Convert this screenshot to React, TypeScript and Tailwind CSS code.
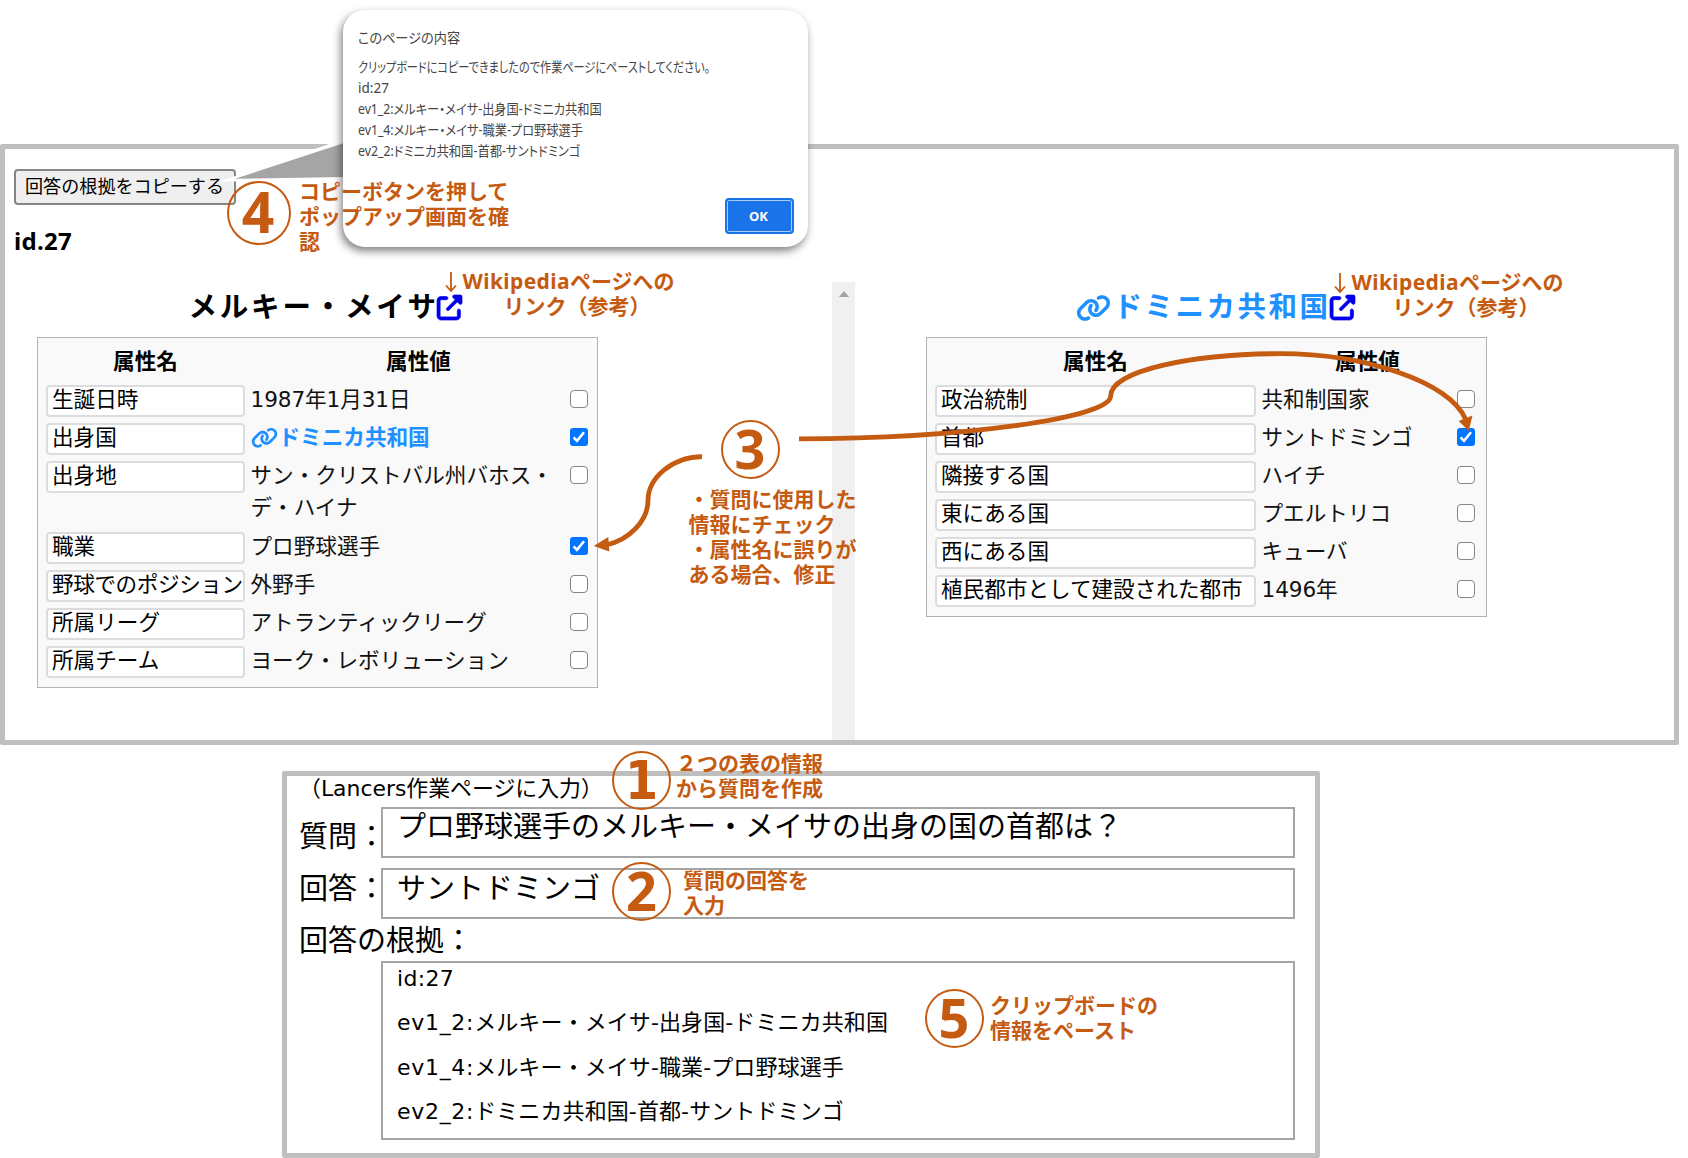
import { ReactNode } from "react";
import { FaLink, FaUpRightFromSquare } from "react-icons/fa6";

const CJK = "font-['DejaVu_Sans','Noto_Sans_CJK_JP',sans-serif]";
const NOTE = "absolute font-bold text-[21px] leading-[25px] text-[#c55a11] whitespace-nowrap font-['Noto_Sans','Noto_Sans_CJK_JP',sans-serif]";

type Row = { name: string; value: ReactNode; checked?: boolean; tall?: boolean };

function Check({ checked }: { checked?: boolean }) {
  return checked ? (
    <span className="mt-[5px] flex size-[18px] items-center justify-center rounded-[3px] bg-[#0075ff]">
      <svg viewBox="0 0 18 18" className="size-[18px]" fill="none" stroke="#fff" strokeWidth="2.6">
        <path d="M3.6 9.4 L7 12.8 L14 4.2" />
      </svg>
    </span>
  ) : (
    <span className="mt-[5px] block size-[18px] rounded-[4px] border-[1.5px] border-[#858585] bg-white" />
  );
}

function AttrTable({ rows, cols }: { rows: Row[]; cols: string }) {
  return (
    <div className="w-[561px] border-[1.5px] border-[#b2b2b2] bg-[#f9f9f9] pt-[8px] pb-[3px] pl-[8.5px] text-[21.6px]">
      <div className={"grid h-[39px] text-center font-bold leading-[32px] text-black " + cols}>
        <span>属性名</span>
        <span className="pl-[22px]">属性値</span>
      </div>
      {rows.map((r) => (
        <div key={r.name} className={"grid items-start " + cols + (r.tall ? " h-[71px]" : " h-[38px]")}>
          <div className="h-8 whitespace-nowrap rounded-[4px] border-2 border-[#dcdcdc] bg-white pl-[4px] leading-[26px] text-black">
            <span className={r.name.length === 9 ? "tracking-[-0.4px]" : ""}>{r.name}</span>
          </div>
          <div className="pl-[5.5px] leading-[32px] text-[#111] whitespace-nowrap -mt-[1px]">{r.value}</div>
          <Check checked={r.checked} />
        </div>
      ))}
    </div>
  );
}

const leftRows: Row[] = [
  { name: "生誕日時", value: <span className="tracking-[-0.1px]">1987年1月31日</span> },
  {
    name: "出身国",
    checked: true,
    value: (
      <span className="flex items-center font-bold text-[#1e90ff]">
        <FaLink className="mr-[1px] h-[21.6px] w-[27px]" />
        ドミニカ共和国
      </span>
    ),
  },
  { name: "出身地", tall: true, value: <>サン・クリストバル州バホス・<br />デ・ハイナ</> },
  { name: "職業", value: "プロ野球選手", checked: true },
  { name: "野球でのポジション", value: "外野手" },
  { name: "所属リーグ", value: "アトランティックリーグ" },
  { name: "所属チーム", value: "ヨーク・レボリューション" },
];

const rightRows: Row[] = [
  { name: "政治統制", value: "共和制国家" },
  { name: "首都", value: "サントドミンゴ", checked: true },
  { name: "隣接する国", value: "ハイチ" },
  { name: "東にある国", value: "プエルトリコ" },
  { name: "西にある国", value: "キューバ" },
  { name: "植民都市として建設された都市", value: <span className="tracking-[-0.1px]">1496年</span> },
];

function ExternalLink({ className }: { className: string }) {
  return <FaUpRightFromSquare stroke="#0000ee" strokeWidth="14" className={"size-[25px] overflow-visible text-[#0000ee] " + className} />;
}

function EvidencePanel() {
  return (
    <section className="flex h-[601px] w-[1679px] flex-col rounded-[2px] border-[5px] border-[#bfbfbf] bg-white">
      <div className="pl-[9px] pt-[20px]">
        <button className="flex h-[36px] w-[222px] items-center rounded-[4px] border-2 border-[#858585] bg-[#efefef] pl-[9px] text-[18.1px] text-black">
          回答の根拠をコピーする
        </button>
        <div className="mt-[20px] h-[57px] text-[24px] font-bold leading-[32px] tracking-[0.3px] text-black font-['Noto_Sans',sans-serif]">id.27</div>
      </div>
      <div className="flex min-h-0 flex-1">
        <div className="w-[827px] pl-[31.5px]">
          <div className="flex h-[55px] items-start pl-[152px] pt-[6px]">
            <h1 className="text-[28.5px] font-bold leading-[40px] tracking-[2.8px] text-black">メルキー・メイサ</h1>
            <ExternalLink className="-ml-[2px] mt-[7px]" />
          </div>
          <AttrTable rows={leftRows} cols="grid-cols-[199px_325px_18px]" />
        </div>
        <div className="flex w-[23px] justify-center bg-[#f0f0f0] pt-[9px]">
          <svg viewBox="0 0 10 6" className="h-[6px] w-[10px]">
            <path d="M5 0 L10 6 H0 Z" fill="#a3a3a3" />
          </svg>
        </div>
        <div className="pl-[70.5px]">
          <div className="flex h-[55px] items-start pl-[150px] pt-[6px]">
            <FaLink className="mt-[5.5px] mr-[3px] h-[28px] w-[35px] text-[#1e90ff]" />
            <h1 className="text-[28.5px] font-bold leading-[40px] tracking-[2.5px] text-[#1e90ff]">ドミニカ共和国</h1>
            <ExternalLink className="-ml-[1px] mt-[7px]" />
          </div>
          <AttrTable rows={rightRows} cols="grid-cols-[321px_201px_18px]" />
        </div>
      </div>
    </section>
  );
}

function EvidenceLine({ id, text }: { id: string; text: string }) {
  return (
    <div>
      <span className="tracking-[0.7px]">{id}</span>
      <span className="tracking-[0.1px]">{text}</span>
    </div>
  );
}

function AnswerPanel() {
  const box = "border-2 border-[#a5a5a5] pl-[14px]";
  return (
    <section className="ml-[282px] mt-[26px] h-[387px] w-[1038px] rounded-[2px] border-[5px] border-[#bfbfbf] bg-white pl-[11px] text-[29px] text-black">
      <div className="h-[31px] pl-[1px] text-[21.9px] leading-[26px]">（Lancers作業ページに入力）</div>
      <div className="flex">
        <div className="w-[83px] pl-[1px] pt-[10px] leading-[40px] whitespace-nowrap">質問：</div>
        <div className={box + " h-[51px] w-[914px] leading-[36px]"}>プロ野球選手のメルキー・メイサの出身の国の首都は？</div>
      </div>
      <div className="mt-[10px] flex">
        <div className="w-[83px] pl-[1px] pt-[1px] leading-[40px] whitespace-nowrap">回答：</div>
        <div className={box + " h-[51px] w-[914px] leading-[38px]"}>サントドミンゴ</div>
      </div>
      <div className="h-[42px] pl-[1px] leading-[44px]">回答の根拠：</div>
      <div className={box + " ml-[83px] h-[179px] w-[914px] text-[22px] leading-[44.4px]"}>
        <div className="-mt-[6px] tracking-[0.3px]">id:27</div>
        <EvidenceLine id="ev1_2:" text="メルキー・メイサ-出身国-ドミニカ共和国" />
        <EvidenceLine id="ev1_4:" text="メルキー・メイサ-職業-プロ野球選手" />
        <EvidenceLine id="ev2_2:" text="ドミニカ共和国-首都-サントドミンゴ" />
      </div>
    </section>
  );
}

function Popup() {
  return (
    <div className="absolute left-[343px] top-[10px] h-[237px] w-[465px] rounded-[22px] bg-white pl-[15px] pt-[16.5px] text-[13.5px] leading-[21px] text-[#454545] shadow-[-2px_4px_9px_rgba(0,0,0,0.5)] font-['Noto_Sans','Noto_Sans_CJK_JP',sans-serif] [font-feature-settings:'palt'] whitespace-nowrap">
      <div className="mb-[9px] origin-left scale-x-[0.94] text-[14px]">このページの内容</div>
      <div className="origin-left scale-x-[0.825]">クリップボードにコピーできましたので作業ページにペーストしてください。</div>
      <div>id:27</div>
      <div className="origin-left scale-x-[0.905]">ev1_2:メルキー・メイサ-出身国-ドミニカ共和国</div>
      <div className="origin-left scale-x-[0.907]">ev1_4:メルキー・メイサ-職業-プロ野球選手</div>
      <div className="origin-left scale-x-[0.912]">ev2_2:ドミニカ共和国-首都-サントドミンゴ</div>
      <button className="absolute left-[382px] top-[188px] flex h-[36px] w-[69px] items-center justify-center rounded-[4px] border-2 border-[#1a73e8] bg-[#1a73e8] pr-[2px] text-[13px] font-bold text-white shadow-[inset_0_0_0_1px_#a9cbf7]">
        OK
      </button>
    </div>
  );
}

function Badge({ n, pos, digit }: { n: string; pos: string; digit: string }) {
  return (
    <div className={"absolute flex items-center justify-center rounded-full border-2 border-[#c55a11] pb-[3px] font-bold leading-none text-[#c55a11] " + pos}>
      <span className={digit}>{n}</span>
    </div>
  );
}

function WikiNote({ pos }: { pos: string }) {
  return (
    <div className={NOTE + " " + pos}>
      <svg viewBox="0 0 12 20" className="absolute left-[-17.5px] top-[3px] h-[20px] w-[12px]" fill="none" stroke="#c55a11" strokeWidth="1.8">
        <path d="M6 0 V19 M1 13.5 L6 19 L11 13.5" />
      </svg>
      <div><span className="tracking-[0.4px]">Wikipedia</span>ページへの</div>
      <div className="pl-[41px]">リンク（参考）</div>
    </div>
  );
}

export default function App() {
  const noto = "font-['Noto_Sans',sans-serif]";
  return (
    <div className={"relative h-[1158px] w-[1688px] overflow-hidden bg-white pt-[144px] " + CJK}>
      <EvidencePanel />
      <AnswerPanel />

      <svg viewBox="0 0 130 50" className="absolute left-[214px] top-[138px] h-[50px] w-[130px]">
        <path d="M5 43.5 L130 1 V42 L20 43.5 Z" fill="#fff" />
        <path d="M21 40.8 L130 5 V39 Z" fill="#a5a5a5" />
      </svg>
      <Popup />

      <Badge n="4" pos="left-[227px] top-[181px] size-[64px] pr-[2px]" digit={"text-[57px] " + noto} />
      <Badge n="3" pos="left-[720.5px] top-[420px] size-[59px]" digit={"text-[54px] " + noto} />
      <Badge n="1" pos="left-[612px] top-[751px] size-[59px]" digit="pt-[3px] text-[53px] font-stretch-condensed font-['DejaVu_Sans_Condensed','DejaVu_Sans',sans-serif]" />
      <Badge n="2" pos="left-[612px] top-[862px] size-[59px]" digit={"text-[54px] " + noto} />
      <Badge n="5" pos="left-[924.5px] top-[989px] size-[59px]" digit={"text-[54px] " + noto} />

      <div className={NOTE + " left-[299px] top-[179px]"}>コピーボタンを押して<br />ポップアップ画面を確<br />認</div>
      <WikiNote pos="left-[462.5px] top-[269px]" />
      <WikiNote pos="left-[1351.5px] top-[270px]" />
      <div className={NOTE + " left-[688.5px] top-[487px]"}>・質問に使用した<br />情報にチェック<br />・属性名に誤りが<br />ある場合、修正</div>
      <div className={NOTE + " left-[676px] top-[751px] text-right"}>２つの表の情報<br />から質問を作成</div>
      <div className={NOTE + " left-[683px] top-[868px]"}>質問の回答を<br />入力</div>
      <div className={NOTE + " left-[990px] top-[993px]"}>クリップボードの<br />情報をペースト</div>

      <svg viewBox="0 0 900 210" className="absolute left-[590px] top-[345px] h-[210px] w-[900px]">
        <g transform="translate(-590 -345)" fill="none" stroke="#c55a11" strokeWidth="4.8">
          <path d="M702 456.7 C672 457 648 478 648 500.5 C648 520 630 540 606 545" />
          <path d="M799 438.8 C960 438.8 1110.7 418 1110.7 396 C1110.7 370 1195 353.7 1280 353.7 C1365 353.7 1450 382 1465.5 419" />
          <path d="M593.7 546 L608.3 537 L609.3 551.5 Z M1468.7 430.9 L1458.7 421 L1472.5 415.5 Z" fill="#c55a11" stroke="none" />
        </g>
      </svg>
    </div>
  );
}
